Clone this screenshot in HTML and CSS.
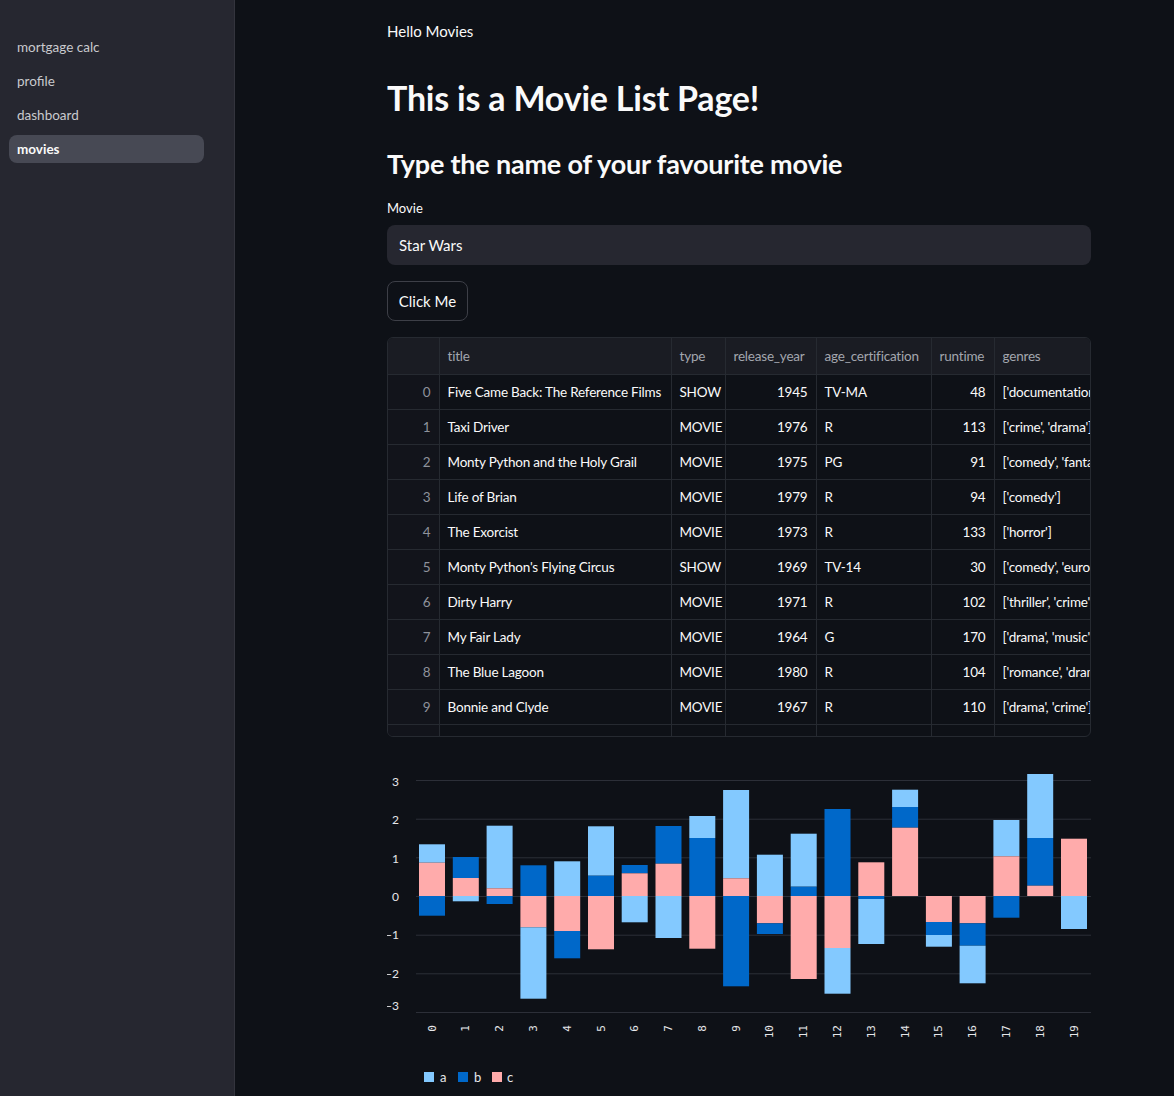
FILE: index.html
```html
<!DOCTYPE html>
<html lang="en">
<head>
<meta charset="utf-8">
<title>movies</title>
<link rel="stylesheet" href="styles.css">
</head>
<body>
<div class="app">
  <aside class="sidebar">
    <nav class="nav">
      <a class="nav-item">mortgage calc</a>
      <a class="nav-item">profile</a>
      <a class="nav-item">dashboard</a>
      <a class="nav-item active">movies</a>
    </nav>
  </aside>
  <main class="main">
    <div class="content">
      <p class="caption">Hello Movies</p>
      <h1 class="title">This is a Movie List Page!</h1>
      <h2 class="subtitle">Type the name of your favourite movie</h2>
      <label class="field-label">Movie</label>
      <div class="text-input">Star Wars</div>
      <button class="btn">Click Me</button>
      <div class="grid-wrap">
        <table class="grid">
          <colgroup>
            <col class="c-idx"><col class="c-title"><col class="c-type"><col class="c-year"><col class="c-age"><col class="c-run"><col class="c-gen">
          </colgroup>
          <thead>
            <tr><th class="idx"></th><th>title</th><th>type</th><th>release_year</th><th>age_certification</th><th>runtime</th><th>genres</th></tr>
          </thead>
          <tbody>
            <tr><td class="idx">0</td><td>Five Came Back: The Reference Films</td><td>SHOW</td><td class="num">1945</td><td>TV-MA</td><td class="num">48</td><td>['documentation']</td></tr>
            <tr><td class="idx">1</td><td>Taxi Driver</td><td>MOVIE</td><td class="num">1976</td><td>R</td><td class="num">113</td><td>['crime', 'drama']</td></tr>
            <tr><td class="idx">2</td><td>Monty Python and the Holy Grail</td><td>MOVIE</td><td class="num">1975</td><td>PG</td><td class="num">91</td><td>['comedy', 'fantasy']</td></tr>
            <tr><td class="idx">3</td><td>Life of Brian</td><td>MOVIE</td><td class="num">1979</td><td>R</td><td class="num">94</td><td>['comedy']</td></tr>
            <tr><td class="idx">4</td><td>The Exorcist</td><td>MOVIE</td><td class="num">1973</td><td>R</td><td class="num">133</td><td>['horror']</td></tr>
            <tr><td class="idx">5</td><td>Monty Python's Flying Circus</td><td>SHOW</td><td class="num">1969</td><td>TV-14</td><td class="num">30</td><td>['comedy', 'european']</td></tr>
            <tr><td class="idx">6</td><td>Dirty Harry</td><td>MOVIE</td><td class="num">1971</td><td>R</td><td class="num">102</td><td>['thriller', 'crime']</td></tr>
            <tr><td class="idx">7</td><td>My Fair Lady</td><td>MOVIE</td><td class="num">1964</td><td>G</td><td class="num">170</td><td>['drama', 'music']</td></tr>
            <tr><td class="idx">8</td><td>The Blue Lagoon</td><td>MOVIE</td><td class="num">1980</td><td>R</td><td class="num">104</td><td>['romance', 'drama']</td></tr>
            <tr><td class="idx">9</td><td>Bonnie and Clyde</td><td>MOVIE</td><td class="num">1967</td><td>R</td><td class="num">110</td><td>['drama', 'crime']</td></tr>
            <tr><td class="idx">10</td><td>The Professionals</td><td>MOVIE</td><td class="num">1966</td><td>PG-13</td><td class="num">117</td><td>['western', 'action']</td></tr>
          </tbody>
        </table>
      </div>
      <svg class="chart" width="704" height="331" viewBox="387 765 704 331" xmlns="http://www.w3.org/2000/svg">
        <g class="gridlines" stroke="#2c2f38" stroke-width="1">
          <line x1="416" x2="1091" y1="780.5" y2="780.5"/>
          <line x1="416" x2="1091" y1="819.2" y2="819.2"/>
          <line x1="416" x2="1091" y1="857.8" y2="857.8"/>
          <line x1="416" x2="1091" y1="896.5" y2="896.5"/>
          <line x1="416" x2="1091" y1="935.2" y2="935.2"/>
          <line x1="416" x2="1091" y1="973.8" y2="973.8"/>
          <line x1="416" x2="1091" y1="1012.5" y2="1012.5"/>
        </g>
        <g class="ylabels" fill="#e6e7ea" font-size="12" text-anchor="end" dominant-baseline="central">
          <text x="399" y="781">3</text>
          <text x="399" y="819">2</text>
          <text x="399" y="858">1</text>
          <text x="399" y="896">0</text>
          <text x="399" y="934">−1</text>
          <text x="399" y="973">−2</text>
          <text x="399" y="1005">−3</text>
        </g>
        <g class="bars">
          <rect x="419" y="844.3" width="26" height="18.4" fill="#83c9ff"/>
          <rect x="419" y="862.7" width="26" height="33.3" fill="#ffabab"/>
          <rect x="419" y="896" width="26" height="19.7" fill="#0068c9"/>

          <rect x="452.8" y="857" width="26" height="21" fill="#0068c9"/>
          <rect x="452.8" y="878" width="26" height="18" fill="#ffabab"/>
          <rect x="452.8" y="896" width="26" height="5.3" fill="#83c9ff"/>

          <rect x="486.6" y="825.7" width="26" height="62.6" fill="#83c9ff"/>
          <rect x="486.6" y="888.3" width="26" height="7.7" fill="#ffabab"/>
          <rect x="486.6" y="896" width="26" height="8" fill="#0068c9"/>

          <rect x="520.4" y="865.3" width="26" height="30.7" fill="#0068c9"/>
          <rect x="520.4" y="896" width="26" height="31.3" fill="#ffabab"/>
          <rect x="520.4" y="927.3" width="26" height="71.4" fill="#83c9ff"/>

          <rect x="554.2" y="861.3" width="26" height="34.7" fill="#83c9ff"/>
          <rect x="554.2" y="896" width="26" height="35" fill="#ffabab"/>
          <rect x="554.2" y="931" width="26" height="27.3" fill="#0068c9"/>

          <rect x="588" y="826.3" width="26" height="49.4" fill="#83c9ff"/>
          <rect x="588" y="875.7" width="26" height="20.3" fill="#0068c9"/>
          <rect x="588" y="896" width="26" height="53.3" fill="#ffabab"/>

          <rect x="621.7" y="865" width="26" height="8.3" fill="#0068c9"/>
          <rect x="621.7" y="873.3" width="26" height="22.7" fill="#ffabab"/>
          <rect x="621.7" y="896" width="26" height="26.3" fill="#83c9ff"/>

          <rect x="655.5" y="826" width="26" height="37.7" fill="#0068c9"/>
          <rect x="655.5" y="863.7" width="26" height="32.3" fill="#ffabab"/>
          <rect x="655.5" y="896" width="26" height="42" fill="#83c9ff"/>

          <rect x="689.3" y="816" width="26" height="22" fill="#83c9ff"/>
          <rect x="689.3" y="838" width="26" height="58" fill="#0068c9"/>
          <rect x="689.3" y="896" width="26" height="52.7" fill="#ffabab"/>

          <rect x="723.1" y="790" width="26" height="88.3" fill="#83c9ff"/>
          <rect x="723.1" y="878.3" width="26" height="17.7" fill="#ffabab"/>
          <rect x="723.1" y="896" width="26" height="90.3" fill="#0068c9"/>

          <rect x="756.9" y="854.7" width="26" height="41.3" fill="#83c9ff"/>
          <rect x="756.9" y="896" width="26" height="27.3" fill="#ffabab"/>
          <rect x="756.9" y="923.3" width="26" height="10.7" fill="#0068c9"/>

          <rect x="790.7" y="833.7" width="26" height="53" fill="#83c9ff"/>
          <rect x="790.7" y="886.7" width="26" height="9.3" fill="#0068c9"/>
          <rect x="790.7" y="896" width="26" height="83" fill="#ffabab"/>

          <rect x="824.5" y="809" width="26" height="87" fill="#0068c9"/>
          <rect x="824.5" y="896" width="26" height="52" fill="#ffabab"/>
          <rect x="824.5" y="948" width="26" height="45.7" fill="#83c9ff"/>

          <rect x="858.3" y="862.3" width="26" height="33.7" fill="#ffabab"/>
          <rect x="858.3" y="896" width="26" height="3" fill="#0068c9"/>
          <rect x="858.3" y="899" width="26" height="45" fill="#83c9ff"/>

          <rect x="892.1" y="789.7" width="26" height="17.3" fill="#83c9ff"/>
          <rect x="892.1" y="807" width="26" height="20.7" fill="#0068c9"/>
          <rect x="892.1" y="827.7" width="26" height="68.3" fill="#ffabab"/>

          <rect x="925.9" y="896" width="26" height="26" fill="#ffabab"/>
          <rect x="925.9" y="922" width="26" height="13" fill="#0068c9"/>
          <rect x="925.9" y="935" width="26" height="11.7" fill="#83c9ff"/>

          <rect x="959.6" y="896" width="26" height="27.3" fill="#ffabab"/>
          <rect x="959.6" y="923.3" width="26" height="22.4" fill="#0068c9"/>
          <rect x="959.6" y="945.7" width="26" height="37.6" fill="#83c9ff"/>

          <rect x="993.4" y="820" width="26" height="36.3" fill="#83c9ff"/>
          <rect x="993.4" y="856.3" width="26" height="39.7" fill="#ffabab"/>
          <rect x="993.4" y="896" width="26" height="21.7" fill="#0068c9"/>

          <rect x="1027.2" y="774" width="26" height="64" fill="#83c9ff"/>
          <rect x="1027.2" y="838" width="26" height="47.7" fill="#0068c9"/>
          <rect x="1027.2" y="885.7" width="26" height="10.3" fill="#ffabab"/>

          <rect x="1061" y="838.7" width="26" height="57.3" fill="#ffabab"/>
          <rect x="1061" y="896" width="26" height="33" fill="#83c9ff"/>
        </g>
        <g class="xlabels" fill="#e6e7ea" font-size="11" text-anchor="end" dominant-baseline="central">
          <text transform="translate(432 1025) rotate(-90)">0</text>
          <text transform="translate(465.8 1025) rotate(-90)">1</text>
          <text transform="translate(499.6 1025) rotate(-90)">2</text>
          <text transform="translate(533.4 1025) rotate(-90)">3</text>
          <text transform="translate(567.2 1025) rotate(-90)">4</text>
          <text transform="translate(601 1025) rotate(-90)">5</text>
          <text transform="translate(634.7 1025) rotate(-90)">6</text>
          <text transform="translate(668.5 1025) rotate(-90)">7</text>
          <text transform="translate(702.3 1025) rotate(-90)">8</text>
          <text transform="translate(736.1 1025) rotate(-90)">9</text>
          <text transform="translate(769.9 1025) rotate(-90)">10</text>
          <text transform="translate(803.7 1025) rotate(-90)">11</text>
          <text transform="translate(837.5 1025) rotate(-90)">12</text>
          <text transform="translate(871.3 1025) rotate(-90)">13</text>
          <text transform="translate(905.1 1025) rotate(-90)">14</text>
          <text transform="translate(938.9 1025) rotate(-90)">15</text>
          <text transform="translate(972.6 1025) rotate(-90)">16</text>
          <text transform="translate(1006.4 1025) rotate(-90)">17</text>
          <text transform="translate(1040.2 1025) rotate(-90)">18</text>
          <text transform="translate(1074 1025) rotate(-90)">19</text>
        </g>
        <g class="legend" font-size="13" fill="#e6e7ea" dominant-baseline="central">
          <rect x="424" y="1072" width="10" height="10" fill="#83c9ff"/>
          <text x="440" y="1077">a</text>
          <rect x="458" y="1072" width="10" height="10" fill="#0068c9"/>
          <text x="474" y="1077">b</text>
          <rect x="492" y="1072" width="10" height="10" fill="#ffabab"/>
          <text x="507" y="1077">c</text>
        </g>
      </svg>
    </div>
  </main>
</div>
</body>
</html>
```
FILE: styles.css
```css
html, body {
  margin: 0;
  padding: 0;
  background: #0e1117;
  color: #fafafa;
  font-family: Lato, "Noto Sans", sans-serif;
}

.app {
  display: flex;
  min-height: 100vh;
}

.sidebar {
  width: 234px;
  flex: 0 0 234px;
  background: #262730;
  border-right: 1px solid #33343d;
  min-height: 1096px;
}

.nav {
  display: flex;
  flex-direction: column;
  gap: 6px;
  padding: 33px 30px 0 9px;
}

.nav-item {
  display: block;
  height: 28px;
  line-height: 28px;
  padding-left: 8px;
  border-radius: 8px;
  font-size: 13.5px;
  color: #c9cace;
}

.nav-item.active {
  background: #474954;
  color: #fafafa;
  font-weight: 700;
}

.main {
  flex: 1;
  overflow: hidden;
}

.content {
  width: 704px;
  margin-left: 152px;
  display: flex;
  flex-direction: column;
  align-items: flex-start;
}

.caption {
  margin: 19px 0 0;
  font-size: 15px;
  line-height: 24px;
}

.title {
  margin: 31px 0 0;
  font-size: 34px;
  line-height: 48px;
  font-weight: 700;
  letter-spacing: -0.2px;
}

.subtitle {
  margin: 24px 0 0;
  font-size: 27px;
  line-height: 36px;
  font-weight: 700;
  letter-spacing: -0.2px;
}

.field-label {
  margin-top: 18px;
  font-size: 13px;
  line-height: 16px;
}

.text-input {
  box-sizing: border-box;
  margin-top: 9px;
  width: 704px;
  height: 40px;
  line-height: 40px;
  padding: 0 12px;
  background: #262730;
  border-radius: 8px;
  font-size: 15px;
}

.btn {
  box-sizing: border-box;
  margin-top: 16px;
  width: 81px;
  height: 40px;
  padding: 0;
  background: #0e1117;
  border: 1px solid #3d3f47;
  border-radius: 8px;
  color: #fafafa;
  font-family: inherit;
  font-size: 15px;
}

.grid-wrap {
  box-sizing: border-box;
  margin-top: 16px;
  width: 704px;
  height: 400px;
  border: 1px solid #262a31;
  border-radius: 6px;
  overflow: hidden;
}

.grid {
  table-layout: fixed;
  border-collapse: collapse;
  width: 826px;
  font-size: 13.5px;
  letter-spacing: -0.2px;
}

.c-idx { width: 51px; }
.c-title { width: 232px; }
.c-type { width: 54px; }
.c-year { width: 91px; }
.c-age { width: 115px; }
.c-run { width: 63px; }
.c-gen { width: 220px; }

.grid th,
.grid td {
  height: 35px;
  padding: 0 8px;
  border-right: 1px solid #262a31;
  border-bottom: 1px solid #262a31;
  white-space: nowrap;
  overflow: visible;
  text-align: left;
  box-sizing: border-box;
}

.grid th {
  height: 36px;
  background: #1a1c23;
  color: #a3a6ae;
  font-weight: 400;
}

.grid td {
  color: #fafafa;
}

.grid td.idx {
  background: #12141b;
  color: #8e929b;
  text-align: right;
}

.grid td.num {
  text-align: right;
}

.chart {
  display: block;
  margin-top: 28px;
  font-family: Lato, "Noto Sans", sans-serif;
}

.xlabels {
  font-family: "DejaVu Sans Mono", monospace;
}
```
